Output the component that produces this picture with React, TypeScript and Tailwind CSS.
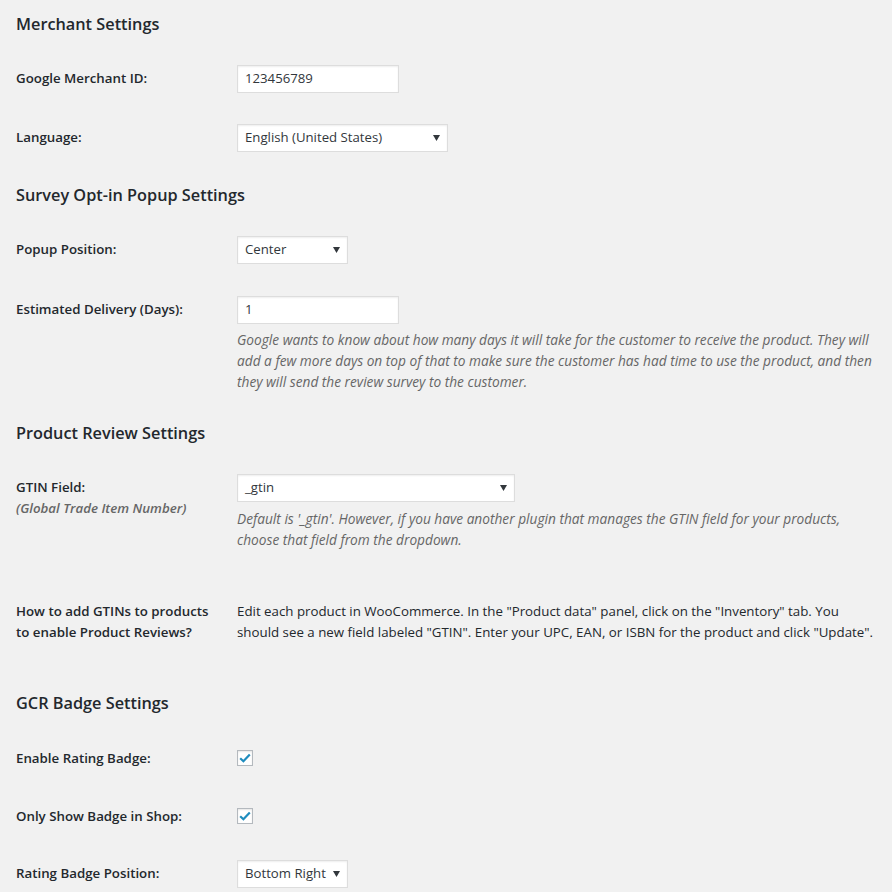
import React from "react";

const Arrow = () => (
  <svg width="7" height="6" viewBox="0 0 7 6" className="shrink-0">
    <path d="M0 0h7L3.5 6z" fill="#32373c" />
  </svg>
);

function Select({ cls, value }: { cls: string; value: string }) {
  return (
    <div
      className={`${cls} h-[28px] bg-white border border-[#dddddd] shadow-[inset_0_1px_2px_rgba(0,0,0,0.07)] flex items-center justify-between pl-[7px] pr-[7px] text-[13.2px] text-[#32373c]`}
    >
      <span className="whitespace-nowrap">{value}</span>
      <Arrow />
    </div>
  );
}

function Input({ value }: { value: string }) {
  return (
    <div className="w-[162px] h-[28px] bg-white border border-[#dddddd] shadow-[inset_0_1px_2px_rgba(0,0,0,0.07)] flex items-center pl-[7px] text-[13.2px] text-[#32373c]">
      {value}
    </div>
  );
}

function Checkbox() {
  return (
    <div className="w-[16px] h-[16px] bg-white border border-[#b4b9be] shadow-[inset_0_1px_2px_rgba(0,0,0,0.1)] flex items-center justify-center">
      <svg width="12" height="10" viewBox="0 0 12 10">
        <path d="M1.2 5.2 L4.4 8.2 L10.8 1.4" fill="none" stroke="#1e8cbe" strokeWidth="2.2" strokeLinejoin="miter" />
      </svg>
    </div>
  );
}

function Heading({ children, cls }: { children: React.ReactNode; cls: string }) {
  return (
    <h2 className={`${cls} h-[22px] leading-[22px] text-[16.3px] font-semibold text-[#23282d] whitespace-nowrap`}>
      {children}
    </h2>
  );
}

function Label({ children, cls = "pt-[3px]" }: { children: React.ReactNode; cls?: string }) {
  return (
    <div className={`w-[221px] shrink-0 ${cls} text-[13.3px] leading-[21px] font-semibold text-[#23282d] whitespace-nowrap`}>
      {children}
    </div>
  );
}

export default function App() {
  return (
    <div
      className="flex flex-col min-h-screen w-full bg-[#f1f1f1] pl-[16px] pt-[13px] pb-[20px]"
      style={{ fontFamily: '"Open Sans", "Noto Sans", sans-serif' }}
    >
      <Heading cls="">Merchant Settings</Heading>

      <div className="flex mt-[30px]">
        <Label>Google Merchant ID:</Label>
        <Input value="123456789" />
      </div>

      <div className="flex mt-[31px]">
        <Label>Language:</Label>
        <Select cls="w-[211px]" value="English (United States)" />
      </div>

      <Heading cls="mt-[32px]">Survey Opt-in Popup Settings</Heading>

      <div className="flex mt-[30px]">
        <Label>Popup Position:</Label>
        <Select cls="w-[111px]" value="Center" />
      </div>

      <div className="flex mt-[32px]">
        <Label>Estimated Delivery (Days):</Label>
        <div>
          <Input value="1" />
          <p className="mt-[5px] text-[13.7px] leading-[21px] italic text-[#666666] whitespace-nowrap">
            Google wants to know about how many days it will take for the customer to receive the product. They will
            <br />
            add a few more days on top of that to make sure the customer has had time to use the product, and then
            <br />
            they will send the review survey to the customer.
          </p>
        </div>
      </div>

      <Heading cls="mt-[30px]">Product Review Settings</Heading>

      <div className="flex mt-[30px]">
        <Label>
          GTIN Field:
          <br />
          <span className="italic text-[#666666]">(Global Trade Item Number)</span>
        </Label>
        <div>
          <Select cls="w-[278px]" value="_gtin" />
          <p className="mt-[6px] text-[13.7px] leading-[21px] italic text-[#666666] whitespace-nowrap">
            Default is '_gtin'. However, if you have another plugin that manages the GTIN field for your products,
            <br />
            choose that field from the dropdown.
          </p>
        </div>
      </div>

      <div className="flex mt-[51px]">
        <Label cls="pt-0">
          How to add GTINs to products
          <br />
          to enable Product Reviews?
        </Label>
        <p className="text-[13.3px] leading-[21px] text-[#23282d] whitespace-nowrap">
          Edit each product in WooCommerce. In the "Product data" panel, click on the "Inventory" tab. You
          <br />
          should see a new field labeled "GTIN". Enter your UPC, EAN, or ISBN for the product and click "Update".
        </p>
      </div>

      <Heading cls="mt-[49px]">GCR Badge Settings</Heading>

      <div className="flex items-center mt-[36px] h-[16px]">
        <Label cls="pt-0">Enable Rating Badge:</Label>
        <Checkbox />
      </div>

      <div className="flex items-center mt-[42px] h-[16px]">
        <Label cls="pt-0">Only Show Badge in Shop:</Label>
        <Checkbox />
      </div>

      <div className="flex mt-[36px]">
        <Label>Rating Badge Position:</Label>
        <Select cls="w-[111px]" value="Bottom Right" />
      </div>
    </div>
  );
}
